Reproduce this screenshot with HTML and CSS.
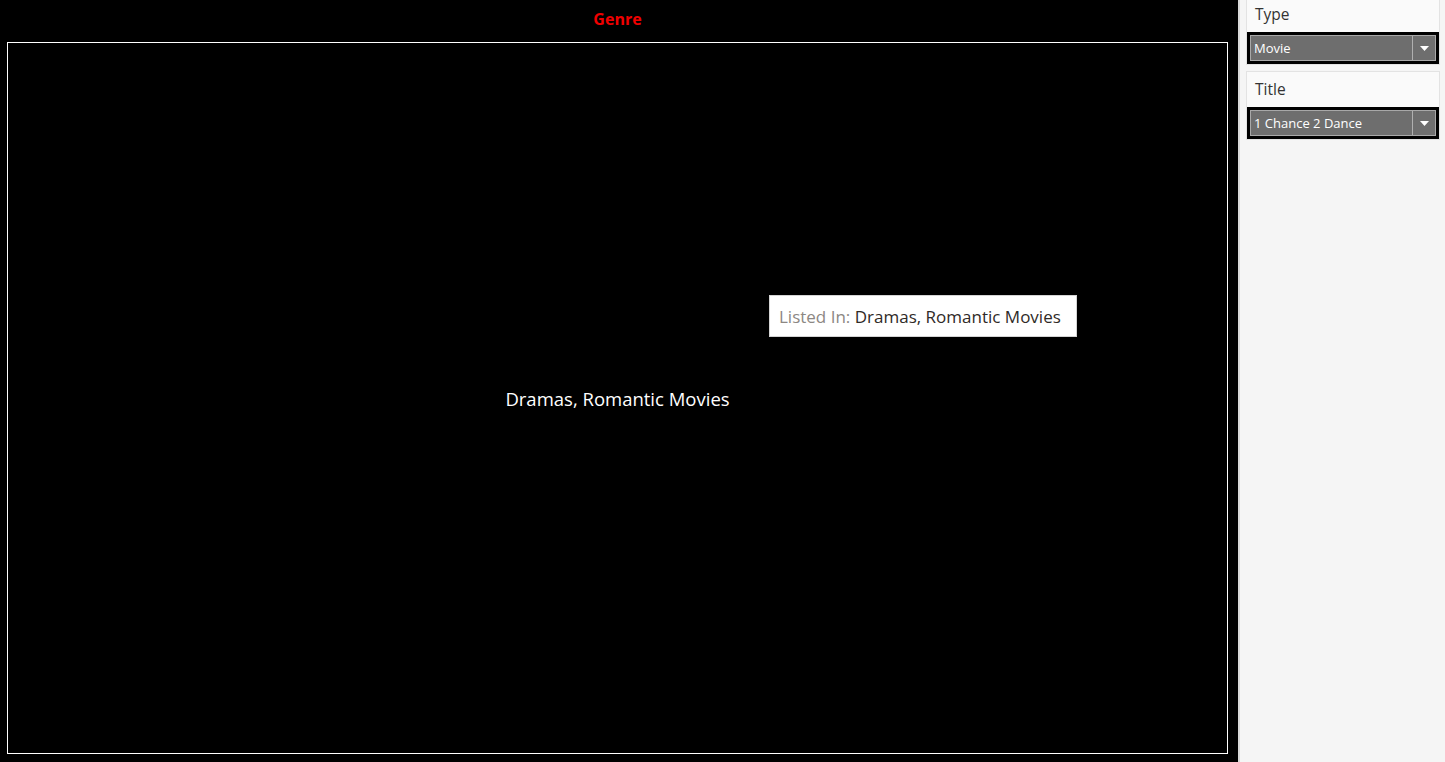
FILE: index.html
```html
<!DOCTYPE html>
<html>
<head>
<meta charset="utf-8">
<link rel="stylesheet" href="styles.css">
</head>
<body>
<div class="page">
  <main class="main">
    <div class="title">Genre</div>
    <div class="chart">
      <div class="label">Dramas, Romantic Movies</div>
      <div class="tooltip"><span class="tt-key">Listed In:</span> <span class="tt-val">Dramas, Romantic Movies</span></div>
    </div>
  </main>
  <aside class="side">
    <div class="card card-first">
      <div class="card-label">Type</div>
      <div class="dd-frame">
        <div class="dd">
          <span class="dd-text">Movie</span>
          <span class="dd-btn"><svg width="9" height="5" viewBox="0 0 9 5"><path d="M0 0H9L4.5 5Z" fill="#fff"/></svg></span>
        </div>
      </div>
    </div>
    <div class="card">
      <div class="card-label">Title</div>
      <div class="dd-frame">
        <div class="dd">
          <span class="dd-text">1 Chance 2 Dance</span>
          <span class="dd-btn"><svg width="9" height="5" viewBox="0 0 9 5"><path d="M0 0H9L4.5 5Z" fill="#fff"/></svg></span>
        </div>
      </div>
    </div>
  </aside>
</div>
</body>
</html>
```

FILE: styles.css
```css
html, body {
  margin: 0;
  padding: 0;
  height: 100%;
  background: #000;
  font-family: "Open Sans", "Noto Sans", "Liberation Sans", sans-serif;
}
.page {
  display: flex;
  width: 1445px;
  height: 762px;
  overflow: hidden;
}
.main {
  width: 1238px;
  flex: none;
  background: #000;
  padding: 0 10px 8px 7px;
  box-sizing: border-box;
  display: flex;
  flex-direction: column;
}
.title {
  height: 42px;
  box-sizing: border-box;
  padding-top: 8px;
  text-align: center;
  color: #f00000;
  font-weight: 700;
  font-size: 16px;
  line-height: 22px;
}
.chart {
  position: relative;
  flex: 1;
  border: 1px solid #fff;
  display: flex;
  align-items: center;
  justify-content: center;
}
.label {
  color: #fff;
  font-size: 18.5px;
  line-height: 24px;
  margin-top: 2px;
}
.tooltip {
  position: absolute;
  left: 761px;
  top: 252px;
  width: 308px;
  height: 42px;
  box-sizing: border-box;
  background: #fff;
  border: 1px solid #d4d4d4;
  padding: 0 0 0 9px;
  font-size: 17px;
  line-height: 41px;
  white-space: nowrap;
}
.tt-key { color: #8c8783; }
.tt-val { color: #2f2a27; }
.side {
  flex: 1;
  background: #f5f5f5;
  border-left: 2px solid #d9d9d9;
  padding: 0 5px 0 6px;
  display: flex;
  flex-direction: column;
  gap: 6px;
}
.card {
  background: #fafafa;
  border: 1px solid #e3e3e3;
}
.card-first {
  border-top-color: #fafafa;
  margin-top: -4px;
}
.card-label {
  height: 35px;
  box-sizing: border-box;
  padding: 7px 0 0 8px;
  font-size: 15.5px;
  line-height: 20px;
  color: #333;
}
.dd-frame {
  background: #000;
  padding: 3px;
}
.dd {
  height: 26px;
  box-sizing: border-box;
  background: #6e6e6e;
  border: 1px solid #a8a8a8;
  display: flex;
  align-items: center;
}
.dd-text {
  flex: 1;
  color: #fff;
  font-size: 13px;
  padding-left: 3px;
  white-space: nowrap;
}
.dd-btn {
  width: 22px;
  height: 100%;
  border-left: 1px solid #b0b0b0;
  display: flex;
  align-items: center;
  justify-content: center;
}
```
